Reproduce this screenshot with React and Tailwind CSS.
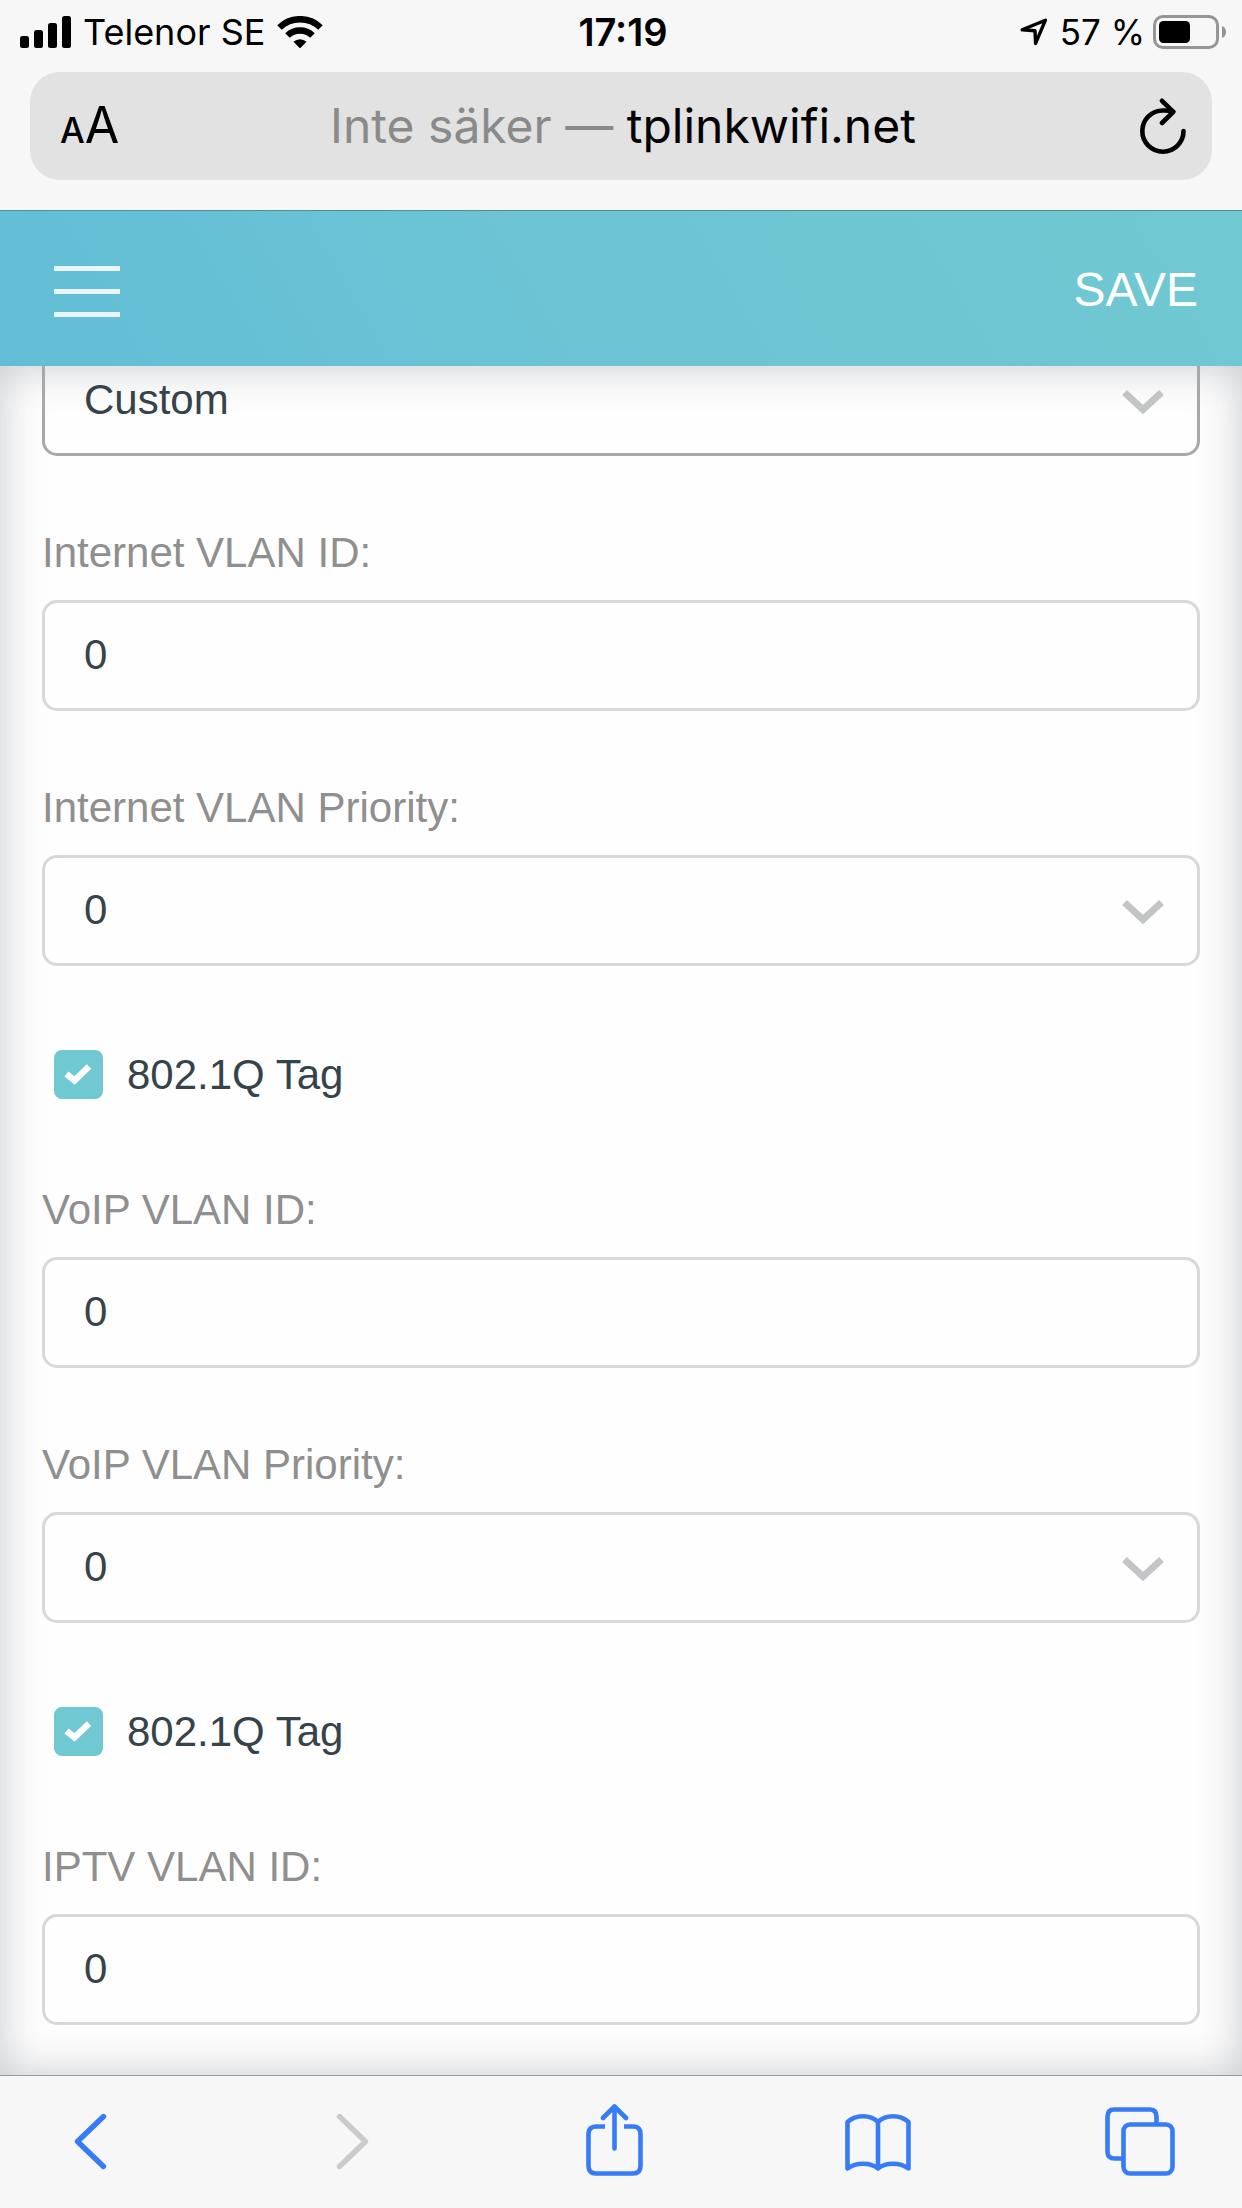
import { useId, useState } from "react";

const priorities = ["0", "1", "2", "3", "4", "5", "6", "7"];

function StatusBar() {
  return (
    <div className="grid h-16 grid-cols-3 items-center pr-4 pl-5 text-[36px] leading-10">
      <div className="flex items-center gap-3">
        <svg className="h-8 w-[51px]" viewBox="0 0 51 32" aria-hidden="true">
          <rect x="0" y="20" width="9" height="12" rx="2.5" />
          <rect x="14" y="14" width="9" height="18" rx="2.5" />
          <rect x="28" y="7" width="9" height="25" rx="2.5" />
          <rect x="42" y="0" width="9" height="32" rx="2.5" />
        </svg>
        <span className="whitespace-nowrap">Telenor SE</span>
        <svg className="h-8 w-[46px] shrink-0" viewBox="0 0 46 32" fill="none" stroke="#000" aria-hidden="true">
          <path d="M2.5 11.5A29.5 29.5 0 0 1 43.5 11.5" strokeWidth="6.5" />
          <path d="M10.5 19.5A18 18 0 0 1 35.5 19.5" strokeWidth="6.5" />
          <path d="M16.5 25.8a9.5 9.5 0 0 1 13 0L23 32.4z" fill="#000" stroke="none" />
        </svg>
      </div>

      <span className="text-center text-[38px] font-semibold">17:19</span>

      <div className="flex items-center justify-end gap-2">
        <svg className="mr-1 h-7 w-7" viewBox="0 0 28 28" fill="none" stroke="#000" strokeWidth="3.4" strokeLinejoin="round" aria-hidden="true">
          <path d="M2.2 11.8L25.4 2.2L15.6 25.4L15 12.8z" />
        </svg>
        <span className="text-[35px] whitespace-nowrap">57 %</span>
        <svg className="h-[34px] w-[73px]" viewBox="0 0 73 34" aria-hidden="true">
          <rect x="1.5" y="1.5" width="63" height="31" rx="8.5" fill="none" stroke="#959595" strokeWidth="3" />
          <rect x="6" y="6" width="31" height="22" rx="4.5" />
          <path d="M69 11a6.5 6.5 0 0 1 0 12z" fill="#959595" />
        </svg>
      </div>
    </div>
  );
}

function AddressBar() {
  return (
    <div className="mx-[30px] mt-2 mb-[30px] flex h-27 items-center rounded-[30px] bg-[#e2e2e3] pr-[26px] pl-[30px]">
      <button type="button" className="flex w-16 items-baseline" aria-label="Text size">
        <span className="text-[35px] font-medium">A</span>
        <span className="text-[50px] leading-15">A</span>
      </button>
      <button type="button" className="flex-1 text-center text-[48px] leading-15 whitespace-nowrap">
        <span className="text-[#8a8a8a]">Inte säker — </span>tplinkwifi.net
      </button>
      <button type="button" className="flex w-16 justify-end" aria-label="Reload">
        <svg className="h-14 w-12" viewBox="0 0 48 56" fill="none" stroke="#000" strokeWidth="4.6" strokeLinecap="round" strokeLinejoin="round">
          <path d="M45.5 33A20.6 20.6 0 1 1 25 12.5Q30 12.3 35 13.5" />
          <path d="M24 2.8L35.3 13.8L24 25" />
        </svg>
      </button>
    </div>
  );
}

function Field({ label, children }) {
  const id = useId();
  return (
    <div className="mt-18">
      <label htmlFor={id} className="block pt-px pb-[23px] text-[#8f8f8f]">
        {label}
      </label>
      {children(id)}
    </div>
  );
}

function TextField({ label }) {
  const [value, setValue] = useState("0");
  return (
    <Field label={label}>
      {(id) => (
        <input
          id={id}
          type="text"
          inputMode="numeric"
          value={value}
          onChange={(e) => setValue(e.target.value)}
          className="block h-[111px] w-full rounded-[15px] border-3 border-[#d8d8d8] px-[39px] pb-0.5 outline-none"
        />
      )}
    </Field>
  );
}

function SelectBox({ options, active, ...rest }) {
  return (
    <div className="relative">
      <select
        {...rest}
        className={`block h-[111px] w-full appearance-none rounded-[15px] border-3 bg-transparent px-[39px] pb-0.5 outline-none ${
          active ? "border-[#a6a8a9]" : "border-[#d8d8d8]"
        }`}
      >
        {options.map((option) => (
          <option key={option}>{option}</option>
        ))}
      </select>
      <svg
        className="pointer-events-none absolute top-11 right-9 h-[26px] w-[42px]"
        viewBox="0 0 42 26"
        fill="none"
        stroke="#c2c4c5"
        strokeWidth="7"
        aria-hidden="true"
      >
        <path d="M2.5 3.5L21 20.5L39.5 3.5" />
      </svg>
    </div>
  );
}

function SelectField({ label }) {
  return <Field label={label}>{(id) => <SelectBox id={id} options={priorities} />}</Field>;
}

function TagCheckbox() {
  const [checked, setChecked] = useState(true);
  return (
    <div className="mt-18 flex h-[75px] items-center pb-0.5 pl-3">
      <label className="flex items-center gap-6">
        <span className="relative">
          <input
            type="checkbox"
            checked={checked}
            onChange={(e) => setChecked(e.target.checked)}
            className="block size-[49px] appearance-none rounded-lg border-2 border-[#70c8d3] checked:bg-[#70c8d3]"
          />
          {checked && (
            <svg
              className="pointer-events-none absolute inset-0 size-[49px]"
              viewBox="0 0 49 49"
              fill="none"
              stroke="#fff"
              strokeWidth="6.5"
              aria-hidden="true"
            >
              <path d="M12.5 24L20.5 30.5L35 16.5" />
            </svg>
          )}
        </span>
        802.1Q Tag
      </label>
    </div>
  );
}

function ToolButton({ label, disabled, children }) {
  return (
    <button type="button" aria-label={label} disabled={disabled} className="text-[#367cf6] disabled:text-[#cbcbcb]">
      <svg className="size-18" viewBox="0 0 72 72" fill="none" stroke="currentColor" strokeWidth="4.6" strokeLinecap="round" strokeLinejoin="round">
        {children}
      </svg>
    </button>
  );
}

function Toolbar() {
  return (
    <nav className="flex h-[133px] items-start justify-between border-t border-[#97999b] bg-[#f7f7f7] pt-7 pr-[66px] pl-[54px]">
      <ToolButton label="Back">
        <path d="M49.5 12.5L23.5 37.5L49.5 62.5" strokeWidth="5.4" />
      </ToolButton>
      <ToolButton label="Forward" disabled>
        <path d="M22.5 12.5L48.5 37.5L22.5 62.5" strokeWidth="5.4" />
      </ToolButton>
      <ToolButton label="Share">
        <path d="M26 22.5H17Q9.5 22.5 9.5 30V62Q9.5 69.5 17 69.5H54Q61.5 69.5 61.5 62V30Q61.5 22.5 54 22.5H45" strokeLinecap="butt" />
        <path d="M35.5 44.5V3M24 14L35.5 2.5L47 14" />
      </ToolButton>
      <ToolButton label="Bookmarks">
        <path d="M5.5 64.5V18Q12 12.3 21 12.3Q30 12.3 36 18Q42 12.3 51 12.3Q60 12.3 66.5 18V64.5Q60 59.8 51 59.8Q42 59.8 36 64.5Q30 59.8 21 59.8Q12 59.8 5.5 64.5zM36 18V64.5" />
      </ToolButton>
      <ToolButton label="Tabs">
        <path d="M52.5 20V12.5Q52.5 5.5 45.5 5.5H10.5Q3.5 5.5 3.5 12.5V47.5Q3.5 54.5 10.5 54.5H19" strokeLinecap="butt" />
        <rect x="19.5" y="20.5" width="49" height="49" rx="6.5" />
      </ToolButton>
    </nav>
  );
}

export default function App() {
  return (
    <div className="flex min-h-screen flex-col bg-[#fefefe] font-['Liberation_Sans',Arial,sans-serif]">
      {/* browser chrome */}
      <div className="border-b border-[#568c96] bg-[#f7f7f7] font-[Inter,sans-serif] text-black">
        <StatusBar />
        <AddressBar />
      </div>

      {/* router page header, stays above the scrolled form */}
      <header className="relative z-10 flex h-[155px] items-center justify-between bg-linear-[60deg] from-[#62bdd6] via-[#6dc5d4] to-[#70c8d2] pr-11 pl-[54px] text-white">
        <button type="button" aria-label="Menu" className="flex flex-col gap-[18px] pt-1.5">
          <span className="h-[5px] w-[66px] bg-white/85" />
          <span className="h-[5px] w-[66px] bg-white/85" />
          <span className="h-[5px] w-[66px] bg-white/85" />
        </button>
        <button type="button" className="pt-0.5 text-[48px] leading-14">SAVE</button>
      </header>

      <main className="flex-1 px-[42px] pb-[50px] text-[42px] leading-12 text-[#37434a] shadow-[inset_0_0_44px_rgba(40,48,60,0.26)]">
        <form className="-mt-[21px]" onSubmit={(e) => e.preventDefault()}>
          <SelectBox options={["Custom", "Bridge"]} active aria-label="Mode" />

          <TextField label="Internet VLAN ID:" />
          <SelectField label="Internet VLAN Priority:" />
          <TagCheckbox />

          <TextField label="VoIP VLAN ID:" />
          <SelectField label="VoIP VLAN Priority:" />
          <TagCheckbox />

          <TextField label="IPTV VLAN ID:" />
        </form>
      </main>

      <Toolbar />
    </div>
  );
}
